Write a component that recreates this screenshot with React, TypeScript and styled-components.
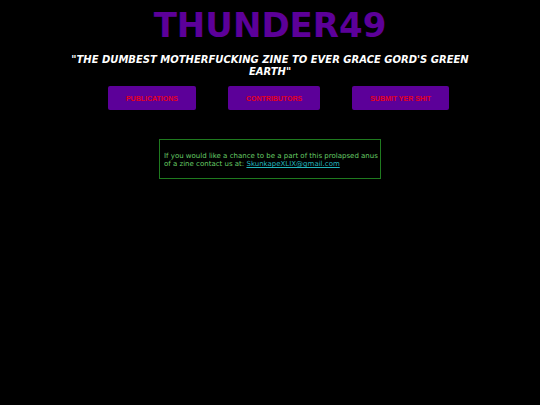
import styled, { createGlobalStyle } from 'styled-components';

const GlobalStyle = createGlobalStyle`
  body {
    margin: 0;
    background: #000;
    font-family: Verdana, 'DejaVu Sans', sans-serif;
  }
`;

const Page = styled.main`
  display: flex;
  flex-direction: column;
  align-items: center;
  padding: 5px 60px;
`;

const Title = styled.h1`
  margin: 0;
  color: #5c0099;
  font-size: 34px;
  line-height: 40px;
`;

const Tagline = styled.h2`
  margin: 9px 0 0;
  color: #fff;
  font-size: 10px;
  font-style: italic;
  line-height: 12px;
  text-align: center;
`;

const Nav = styled.nav`
  display: flex;
  justify-content: center;
  gap: 32px;
  margin-top: 8px;
  padding-left: 17px;
`;

const NavButton = styled.button`
  height: 24px;
  padding: 0 18px;
  border: none;
  border-radius: 2px;
  background: #5c0099;
  color: #e6001f;
  font-family: 'Liberation Sans', Arial, sans-serif;
  font-size: 7px;
  font-weight: bold;
  white-space: nowrap;
  cursor: pointer;

  &:hover {
    background: #7300bf;
  }
`;

const ContactBox = styled.section`
  box-sizing: border-box;
  max-width: 222px;
  margin-top: 29px;
  padding: 12px 0 10px 4px;
  border: 1px solid #1f7a1f;
  color: #66cc66;
  font-size: 7px;
  line-height: 8px;
`;

const ContactText = styled.p`
  margin: 0;
`;

const MailLink = styled.a`
  color: #22b5bd;
`;

const links = ['PUBLICATIONS', 'CONTRIBUTORS', 'SUBMIT YER SHIT'];

const App = () => {
  return (
    <>
      <GlobalStyle />
      <Page>
        <Title>THUNDER49</Title>
        <Tagline>"THE DUMBEST MOTHERFUCKING ZINE TO EVER GRACE GORD'S GREEN EARTH"</Tagline>
        <Nav>
          {links.map(link => (
            <NavButton key={link} type="button">{link}</NavButton>
          ))}
        </Nav>
        <ContactBox>
          <ContactText>
            If you would like a chance to be a part of this prolapsed anus of a zine contact us at:{' '}
            <MailLink href="mailto:SkunkapeXLIX@gmail.com">SkunkapeXLIX@gmail.com</MailLink>
          </ContactText>
        </ContactBox>
      </Page>
    </>
  );
};

export default App;
